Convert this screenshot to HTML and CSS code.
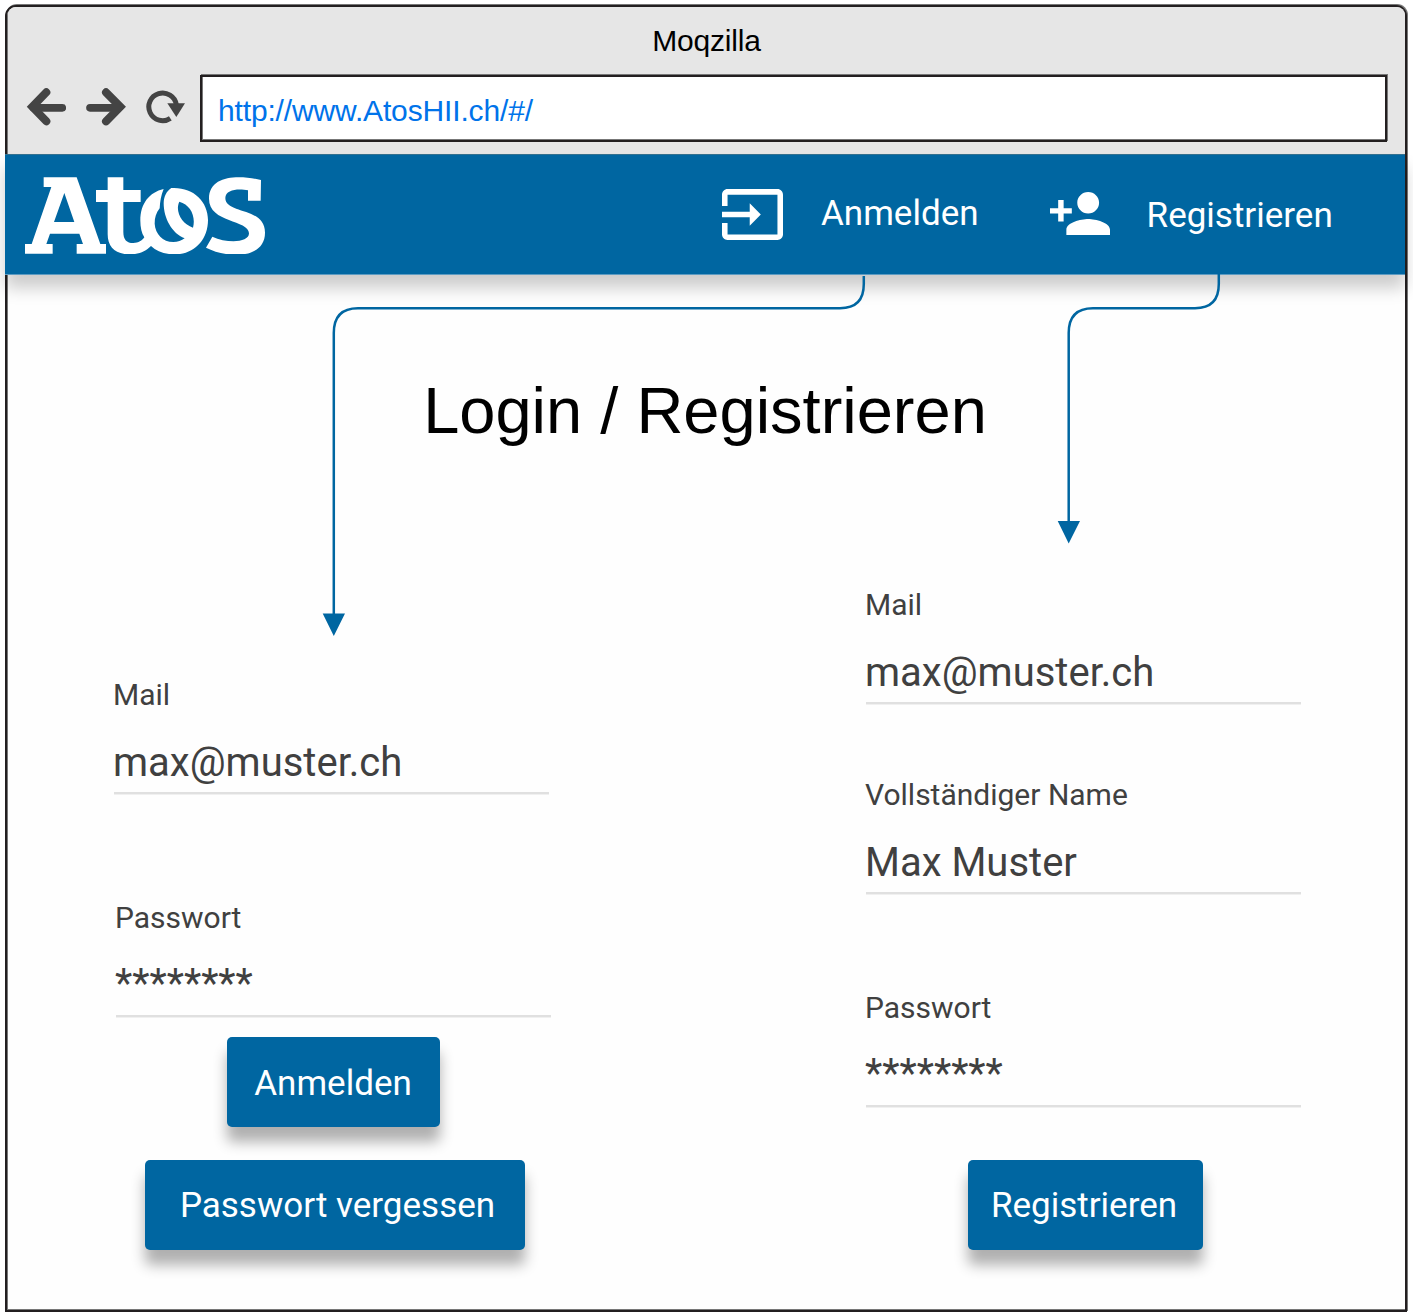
FILE: index.html
```html
<!DOCTYPE html>
<html lang="de">
<head>
<meta charset="utf-8">
<title>Moqzilla</title>
<link rel="stylesheet" href="styles.css">
</head>
<body>
<div class="window">
  <div class="chrome">
    <div class="window-title">Moqzilla</div>
    <div class="toolbar">
      <svg class="tool" width="40" height="39" viewBox="78 261 120 117">
        <path d="M139 277L97 320.500L139 364" fill="none" stroke="#444" stroke-width="24" stroke-linecap="round"/>
        <path d="M100 323.500H187" fill="none" stroke="#444" stroke-width="23" stroke-linecap="round"/>
      </svg>
      <svg class="tool" width="40" height="39" viewBox="258 261 120 117">
        <path d="M318 277L361 320.500L318 364" fill="none" stroke="#444" stroke-width="24" stroke-linecap="round"/>
        <path d="M270 323.500H356" fill="none" stroke="#444" stroke-width="23" stroke-linecap="round"/>
      </svg>
      <svg class="tool" width="40" height="39" viewBox="438 261 120 117">
        <path d="M511 355A41.500 41.500 0 1 1 529 314" fill="none" stroke="#444" stroke-width="15"/>
        <path d="M502 310H555L529 351Z" fill="#444"/>
      </svg>
      <div class="address">http://www.AtosHII.ch/#/</div>
    </div>
  </div>

  <header class="app-bar">
    <svg class="logo" width="240" height="77" viewBox="45 36 720 231" fill="#fff" fill-rule="evenodd">
      <path d="M101 37H200L271 237H288V266H200V237H219L208 206H120L109 237H128V266H45V237H65L124 66H101ZM163 84L132 171H193Z"/>
      <path d="M293 37H340V75H392V111H340V200C340 224 350 234 370 234C386 234 396 227 403 217C395 204 391 187 391 167C391 115 418 82 461 72C453 91 450 110 449 130C438 144 434 158 434 176C436 207 458 231 490 231C503 231 515 227 524 220C486 206 461 160 461 115C461 94 470 78 484 69C548 65 594 108 594 165C594 225 552 268 495 268C464 268 440 260 423 243C406 260 388 268 358 268C316 268 293 246 293 208V111H258V75H293ZM508 110C494 139 516 178 549 188C558 153 541 119 508 110Z"/>
      <path d="M753 45L752 107H714V76C688 70 646 72 646 99C646 148 765 125 765 203C765 280 658 283 588 248L607 215C650 235 717 234 717 205C717 163 597 175 597 101C597 28 690 30 753 45Z"/>
    </svg>
    <a class="nav-item nav-login">
      <svg width="61" height="51" viewBox="1 3 22 18" preserveAspectRatio="none" fill="#fff"><path d="M21 3.010H3c-1.100 0-2 .9-2 2V9h2V4.990h18v14.030H3V15H1v4.010c0 1.100.9 1.980 2 1.980h18c1.100 0 2-.88 2-1.980v-14c0-1.110-.9-2-2-2zM11 16l4-4-4-4v3H1v2h10v3z"/></svg>
      <span>Anmelden</span>
    </a>
    <a class="nav-item nav-register">
      <svg width="60" height="43" viewBox="1 4 22 16" preserveAspectRatio="none" fill="#fff"><path d="M15 12c2.210 0 4-1.790 4-4s-1.790-4-4-4-4 1.790-4 4 1.790 4 4 4zm-9-2V7H4v3H1v2h3v3h2v-3h3v-2H6zm9 4c-2.670 0-8 1.340-8 4v2h16v-2c0-2.660-5.330-4-8-4z"/></svg>
      <span>Registrieren</span>
    </a>
  </header>

  <main class="page">
    <h1>Login / Registrieren</h1>
    <div class="forms">
      <form class="form login">
        <div class="field"><div class="label">Mail</div><div class="value">max@muster.ch</div></div>
        <div class="field login-password"><div class="label">Passwort</div><div class="value masked">********</div></div>
        <div class="actions">
          <button class="button button-login" type="button">Anmelden</button>
          <button class="button button-forgot" type="button">Passwort vergessen</button>
        </div>
      </form>
      <form class="form register">
        <div class="field"><div class="label">Mail</div><div class="value">max@muster.ch</div></div>
        <div class="field register-name"><div class="label">Vollständiger Name</div><div class="value">Max Muster</div></div>
        <div class="field register-password"><div class="label">Passwort</div><div class="value masked">********</div></div>
        <div class="actions">
          <button class="button button-register" type="button">Registrieren</button>
        </div>
      </form>
    </div>
  </main>
</div>

<svg class="connectors" width="1413" height="1316" viewBox="0 0 1413 1316">
  <g fill="none" stroke="#0066a1" stroke-width="2.500">
    <path d="M863.800 276V284Q863.800 308.200 840 308.200H358Q333.800 308.200 333.800 333V616"/>
    <path d="M1218.800 274V284Q1218.800 308.200 1195 308.200H1093Q1068.700 308.200 1068.700 333V524"/>
  </g>
  <path d="M322.700 613.500H345L333.800 636ZM1057.700 521H1080L1068.700 543.500Z" fill="#0066a1"/>
</svg>
</body>
</html>
```
FILE: styles.css
```css
* {
  box-sizing: border-box;
}

body {
  margin: 0;
  padding: 5px 6px 4px 5px;
  height: 1316px;
  position: relative;
  overflow: hidden;
  background: #fff;
  font-family: Roboto, sans-serif;
  color: #404040;
}

.window {
  width: 1402px;
  height: 1307px;
  border: 2px solid #231f20;
  border-radius: 11px 11px 0 0;
  background: #fefefe;
  box-shadow: 1px -1px 0 #777, inset 1px -1px 0 #777;
}

.chrome {
  height: 147px;
  margin-left: 1px;
  padding-top: 17px;
  border-radius: 8px 8px 0 0;
  background: #e6e6e6;
  font-family: "Liberation Sans", Arial, sans-serif;
}

.window-title {
  font-size: 30px;
  line-height: 34px;
  letter-spacing: -0.2px;
  text-align: center;
  color: #000;
}

.toolbar {
  display: flex;
  gap: 20px;
  margin-top: 17px;
  padding-left: 18px;
}

.tool {
  flex: none;
  margin-top: 12px;
}

.address {
  width: 1187px;
  height: 67px;
  margin-left: -6px;
  padding: 17px 16px 0;
  border: 2px solid #231f20;
  background: #fff;
  box-shadow: 1px -1px 0 #777, inset 1px -1px 0 #777;
  font-size: 30px;
  line-height: 34px;
  letter-spacing: -0.15px;
  color: #0073ea;
}

.app-bar {
  display: flex;
  position: relative;
  width: 1400px;
  height: 121px;
  margin-left: -2px;
  padding-left: 20px;
  border-top: 1px solid #33708f;
  border-bottom: 1px solid #5c9bc2;
  background: #0066a1;
  box-shadow: 0 13px 16px rgba(0, 0, 0, 0.2);
}

.logo {
  margin-top: 22px;
}

.nav-item {
  display: flex;
  align-items: flex-start;
  font-size: 35px;
  line-height: 42px;
  color: #fff;
}

.nav-login {
  gap: 38px;
  margin: 34px 0 0 457px;
}

.nav-login span {
  margin-top: 4px;
}

.nav-register {
  gap: 37px;
  margin: 37px 0 0 71px;
}

.nav-register span {
  margin-top: 3px;
}

.page {
  padding-top: 99px;
}

h1 {
  margin: 0 2px 0 0;
  font: 400 65px/74px "Liberation Sans", Arial, sans-serif;
  text-align: center;
  color: #000;
}

.forms {
  display: flex;
  align-items: flex-start;
  gap: 317px;
  padding-left: 107px;
}

.form {
  width: 435px;
}

.login {
  padding-top: 229px;
}

.register {
  padding-top: 139px;
}

.field {
  width: 435px;
  height: 117px;
  border-bottom: 2px solid #e0e0e0;
  box-shadow: 0 1px 0 #f0f0f0;
}

.label {
  margin-left: -1px;
  font-size: 30px;
  line-height: 36px;
}

.value {
  margin: 26px 0 0 -1px;
  font-size: 40px;
  line-height: 48px;
}

.masked {
  margin-top: 24px;
}

.login-password {
  margin: 106px 0 0 2px;
}

.register-name {
  margin-top: 73px;
}

.register-password {
  margin-top: 96px;
}

.actions {
  display: flex;
  flex-direction: column;
  align-items: center;
  width: 442px;
  padding-top: 20px;
}

.button {
  height: 90px;
  padding: 2px 0 0;
  border: 0;
  border-radius: 5px;
  background: #0066a1;
  box-shadow: 0 15px 14px rgba(0, 0, 0, 0.31);
  font: 400 35px/42px Roboto, sans-serif;
  color: #fff;
}

.button-login {
  width: 213px;
  margin-right: 3px;
  padding: 4px 1px 0 0;
}

.button-forgot {
  width: 380px;
  margin-top: 33px;
  padding-left: 5px;
}

.register .actions {
  width: 438px;
  padding-top: 53px;
}

.button-register {
  width: 235px;
  padding-right: 2px;
}

.connectors {
  position: absolute;
  top: 0;
  left: 0;
  pointer-events: none;
}
```
